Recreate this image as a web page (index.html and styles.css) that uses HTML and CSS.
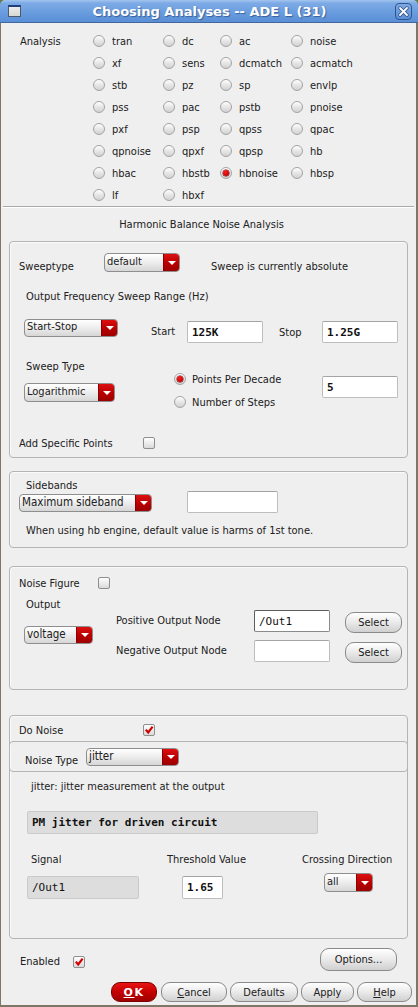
FILE: index.html
```html
<!DOCTYPE html>
<html>
<head>
<meta charset="utf-8">
<link rel="stylesheet" href="styles.css">
</head>
<body>
<div class="window">
  <div class="titlebar">
    <span class="ticon"></span>
    <span class="ttext">Choosing Analyses -- ADE L (31)</span>
    <span class="tclose"><svg width="15" height="15" viewBox="0 0 15 15"><path d="M4 4 L11 11 M11 4 L4 11" stroke="#2b4f86" stroke-width="3.4" stroke-linecap="round"/><path d="M4 4 L11 11 M11 4 L4 11" stroke="#fff" stroke-width="1.8" stroke-linecap="round"/></svg></span>
  </div>
  <div class="frame">
    <div class="analysis">
      <div class="alabel">Analysis</div>
      <div class="agrid">
        <label class="radio"><span class="rb"></span>tran</label>
        <label class="radio"><span class="rb"></span>dc</label>
        <label class="radio"><span class="rb"></span>ac</label>
        <label class="radio"><span class="rb"></span>noise</label>
        <label class="radio"><span class="rb"></span>xf</label>
        <label class="radio"><span class="rb"></span>sens</label>
        <label class="radio"><span class="rb"></span>dcmatch</label>
        <label class="radio"><span class="rb"></span>acmatch</label>
        <label class="radio"><span class="rb"></span>stb</label>
        <label class="radio"><span class="rb"></span>pz</label>
        <label class="radio"><span class="rb"></span>sp</label>
        <label class="radio"><span class="rb"></span>envlp</label>
        <label class="radio"><span class="rb"></span>pss</label>
        <label class="radio"><span class="rb"></span>pac</label>
        <label class="radio"><span class="rb"></span>pstb</label>
        <label class="radio"><span class="rb"></span>pnoise</label>
        <label class="radio"><span class="rb"></span>pxf</label>
        <label class="radio"><span class="rb"></span>psp</label>
        <label class="radio"><span class="rb"></span>qpss</label>
        <label class="radio"><span class="rb"></span>qpac</label>
        <label class="radio"><span class="rb"></span>qpnoise</label>
        <label class="radio"><span class="rb"></span>qpxf</label>
        <label class="radio"><span class="rb"></span>qpsp</label>
        <label class="radio"><span class="rb"></span>hb</label>
        <label class="radio"><span class="rb"></span>hbac</label>
        <label class="radio"><span class="rb"></span>hbstb</label>
        <label class="radio"><span class="rb on"></span>hbnoise</label>
        <label class="radio"><span class="rb"></span>hbsp</label>
        <label class="radio"><span class="rb"></span>lf</label>
        <label class="radio"><span class="rb"></span>hbxf</label>
      </div>
    </div>
    <div class="sep"></div>
    <div class="heading">Harmonic Balance Noise Analysis</div>

    <div class="grp g1">
      <div class="row r-swt">
        <span class="lbl l-swt">Sweeptype</span>
        <div class="dd w-default"><span class="ddt">default</span><span class="dda"></span></div>
        <span class="lbl l-abs">Sweep is currently absolute</span>
      </div>
      <div class="lbl l-range">Output Frequency Sweep Range (Hz)</div>
      <div class="row r-ss">
        <div class="dd w-ss"><span class="ddt">Start-Stop</span><span class="dda"></span></div>
        <span class="lbl l-start">Start</span>
        <div class="inp w76 mt3">125K</div>
        <span class="lbl l-stop">Stop</span>
        <div class="inp w76 mt3">1.25G</div>
      </div>
      <div class="row r-st">
        <div class="col c-st">
          <span class="lbl l-st">Sweep Type</span>
          <div class="dd w-log"><span class="ddt">Logarithmic</span><span class="dda"></span></div>
        </div>
        <div class="col c-rad">
          <label class="radio r1"><span class="rb on"></span>Points Per Decade</label>
          <label class="radio r2"><span class="rb"></span>Number of Steps</label>
        </div>
        <div class="inp w76 mt16">5</div>
      </div>
      <div class="row r-add">
        <span class="lbl l-add">Add Specific Points</span>
        <span class="cb"></span>
      </div>
    </div>

    <div class="grp g2">
      <div class="lbl l-sb">Sidebands</div>
      <div class="row r-sb">
        <div class="dd w-max"><span class="ddt">Maximum sideband</span><span class="dda"></span></div>
        <div class="inp w91"></div>
      </div>
      <div class="lbl l-hb">When using hb engine, default value is harms of 1st tone.</div>
    </div>

    <div class="grp g3">
      <div class="row r-nf">
        <span class="lbl l-nf">Noise Figure</span>
        <span class="cb"></span>
      </div>
      <div class="row r-out">
        <div class="col c-out">
          <span class="lbl l-out">Output</span>
          <div class="dd w-volt"><span class="ddt">voltage</span><span class="dda"></span></div>
        </div>
        <div class="col c-nodes">
          <span class="lbl l-pos">Positive Output Node</span>
          <span class="lbl l-neg">Negative Output Node</span>
        </div>
        <div class="col c-inps">
          <div class="inp w76 focus plain mt12">/Out1</div>
          <div class="inp w76 mt8"></div>
        </div>
        <div class="col c-sel">
          <div class="btn sel1">Select</div>
          <div class="btn sel2">Select</div>
        </div>
      </div>
    </div>

    <div class="grp g4">
      <div class="row r-dn">
        <span class="lbl l-dn">Do Noise</span>
        <span class="cb checked"><svg width="10" height="10" viewBox="0 0 10 10"><path d="M1.8 4.6 L4.2 7.4 L8.6 1.6" fill="none" stroke="#d40000" stroke-width="2.2"/></svg></span>
      </div>
      <div class="subbox">
        <span class="lbl l-nt">Noise Type</span>
        <div class="dd w-jit"><span class="ddt">jitter</span><span class="dda"></span></div>
      </div>
      <div class="lbl l-jit">jitter: jitter measurement at the output</div>
      <div class="gbox w-pm">PM jitter for driven circuit</div>
      <div class="row r-hdr">
        <span class="lbl l-sig">Signal</span>
        <span class="lbl l-thr">Threshold Value</span>
        <span class="lbl">Crossing Direction</span>
      </div>
      <div class="row r-fld">
        <div class="gbox plain w-sig">/Out1</div>
        <div class="inp w-thr">1.65</div>
        <div class="dd w-all"><span class="ddt">all</span><span class="dda"></span></div>
      </div>
    </div>

    <div class="row r-en">
      <span class="lbl l-en">Enabled</span>
      <span class="cb checked en-cb"><svg width="10" height="10" viewBox="0 0 10 10"><path d="M1.8 4.6 L4.2 7.4 L8.6 1.6" fill="none" stroke="#d40000" stroke-width="2.2"/></svg></span>
      <div class="btn b-opt">Options...</div>
    </div>
    <div class="row r-btns">
      <div class="btn ok"><u>O</u>K</div>
      <div class="btn b-cancel"><u>C</u>ancel</div>
      <div class="btn b-def">Defaults</div>
      <div class="btn b-apply">Apply</div>
      <div class="btn b-help"><u>H</u>elp</div>
    </div>
  </div>
</div>
</body>
</html>
```

FILE: styles.css
```css
* { box-sizing: border-box; }
html, body { margin: 0; padding: 0; }
body {
  width: 418px; height: 1007px; overflow: hidden;
  background: #5f7a3c;
  font-family: "DejaVu Sans Condensed", "DejaVu Sans", sans-serif;
  font-stretch: condensed;
  font-size: 11px;
  color: #202020;
}
.window { width: 418px; height: 1007px; display: flex; flex-direction: column; }

.titlebar {
  height: 23px; flex: none;
  display: flex; align-items: center;
  padding: 0 6px 0 8px;
  border-radius: 5px 5px 0 0;
  background: linear-gradient(#a3c4ee 0, #7eabe6 3px, #6a9ddf 12px, #5a8fd6 22px);
  border-bottom: 1px solid #41679e;
}
.ticon {
  width: 13px; height: 12px;
  border: 1px solid #4d5a6e; border-top: 2px solid #1e3f7a;
  background: linear-gradient(#ececea, #d8d8d4);
}
.ttext {
  flex: 1; text-align: center; padding-left: 3px;
  font-family: "DejaVu Sans", sans-serif; font-stretch: normal;
  font-weight: bold; font-size: 13px; color: #fff;
  text-shadow: 1px 1px 1px rgba(20, 50, 100, 0.55);
}
.tclose {
  width: 17px; height: 17px;
  border: 1px solid #2c5590; border-radius: 4px;
  background: linear-gradient(#7eaae4, #5a8ed6);
  display: flex; align-items: center; justify-content: center;
}

.frame {
  flex: 1;
  background: #efefef;
  border-left: 1px solid #7f7666;
  border-right: 2px solid #7f7666;
  border-bottom: 2px solid #7f7666;
  display: flex; flex-direction: column;
}

.lbl { line-height: 13px; white-space: nowrap; }
.row { display: flex; align-items: flex-start; flex: none; }
.col { display: flex; flex-direction: column; align-items: flex-start; }

/* analysis */
.analysis { display: flex; padding-top: 7px; height: 183px; flex: none; }
.alabel { margin-left: 19px; width: 73px; line-height: 22px; padding-top: 1px; }
.agrid { display: grid; grid-template-columns: 70px 57px 71px 80px; grid-auto-rows: 22px; }
.radio { display: flex; align-items: center; gap: 7px; white-space: nowrap; }
.rb {
  width: 12px; height: 12px; flex: none;
  border-radius: 50%;
  border: 1px solid #a3a3a3;
  background: linear-gradient(#ffffff, #e6e6e6 50%, #d2d2d2);
  display: flex; align-items: center; justify-content: center;
}
.rb.on::after {
  content: ""; width: 6px; height: 6px; border-radius: 50%;
  background: radial-gradient(circle at 40% 35%, #ff2020, #c00000 70%);
  box-shadow: 0 0 0 0.5px #7a0000;
}

.sep { height: 2px; margin: 0 2px; border-top: 1px solid #a9a9a9; border-bottom: 1px solid #ffffff; flex: none; }
.heading { margin-top: 10px; line-height: 13px; text-align: center; padding-right: 14px; flex: none; }

/* group boxes */
.grp {
  margin: 0 8px; flex: none;
  border: 1px solid #b4b4b4; border-radius: 4px;
  box-shadow: inset 1px 1px 0 #fafafa;
}

/* dropdown */
.dd {
  display: flex; height: 19px;
  border: 1px solid #8e8e8e; border-radius: 4px;
  background: linear-gradient(#ffffff, #efefef 45%, #d6d6d6);
  overflow: hidden; flex: none;
}
.ddt { flex: 1; padding-left: 2px; line-height: 15px; white-space: nowrap; }
.dda {
  width: 16px; flex: none;
  background: linear-gradient(#dc1010, #b80000 55%, #9c0000);
  border-left: 1px solid #8a0000;
  display: flex; align-items: center; justify-content: center;
}
.dda::after {
  content: ""; width: 0; height: 0;
  border-left: 4px solid transparent; border-right: 4px solid transparent;
  border-top: 4px solid #ffffff;
}

/* inputs */
.inp {
  height: 22px; flex: none;
  background: #ffffff;
  border: 1px solid #bdbdbd; border-top-color: #a4a4a4;
  border-radius: 2px;
  font-family: "DejaVu Sans Mono", monospace; font-stretch: normal;
  font-weight: bold; font-size: 11px; color: #111;
  padding-left: 4px;
  display: flex; align-items: center;
}
.inp.focus { border-color: #5d5d5d; border-bottom-color: #8a8a8a; border-right-color: #8a8a8a; }
.plain { font-weight: normal; }
.w76 { width: 76px; }
.w91 { width: 91px; }
.mt3 { margin-top: 3px; }
.mt8 { margin-top: 8px; }
.mt12 { margin-top: 12px; }
.mt16 { margin-top: 16px; }

.gbox {
  height: 23px; flex: none;
  background: #dddddd;
  border: 1px solid #cacaca; border-radius: 2px;
  font-family: "DejaVu Sans Mono", monospace; font-stretch: normal;
  font-weight: bold; font-size: 11px; color: #111;
  padding-left: 4px;
  display: flex; align-items: center;
}
.gbox.plain { font-weight: normal; }

/* checkbox */
.cb {
  width: 12px; height: 12px; flex: none;
  border: 1px solid #8e8e8e; border-radius: 2px;
  background: linear-gradient(#ffffff, #dadada);
  display: flex; align-items: center; justify-content: center;
}

/* buttons */
.btn {
  height: 21px; flex: none;
  border: 1px solid #8a8a8a; border-radius: 9px;
  background: linear-gradient(#ffffff, #ececec 45%, #d0d0d0);
  display: flex; align-items: center; justify-content: center;
  white-space: nowrap;
}
.btn u { text-decoration: underline; text-underline-offset: 1px; }

/* group 1 */
.g1 { margin-top: 10px; padding: 11px 0 7px; }
.r-swt { height: 20px; }
.l-swt { margin-left: 9px; width: 85px; margin-top: 7px; }
.w-default { width: 76px; }
.l-abs { margin-left: 31px; margin-top: 7px; }
.l-range { margin-top: 17px; margin-left: 16px; }
.r-ss { margin-top: 15px; height: 25px; }
.w-ss { width: 94px; height: 18px; margin-left: 14px; margin-top: 1px; }
.w-ss .ddt { line-height: 14px; }
.l-start { margin-left: 33px; width: 36px; margin-top: 7px; }
.l-stop { margin-left: 16px; width: 43px; margin-top: 8px; }
.r-st { margin-top: 17px; }
.c-st { margin-left: 14px; width: 91px; }
.l-st { margin-left: 2px; line-height: 14px; }
.w-log { width: 91px; margin-top: 9px; }
.c-rad { margin-left: 59px; width: 148px; }
.c-rad .radio { gap: 6px; height: 14px; }
.r1 { margin-top: 12px; }
.r2 { margin-top: 9px; }
.r-add { margin-top: 28px; height: 13px; }
.l-add { margin-left: 9px; width: 124px; }

/* group 2 */
.g2 { margin-top: 13px; padding: 8px 0 10px; }
.l-sb { margin-left: 16px; line-height: 11px; }
.r-sb { height: 22px; }
.w-max { width: 133px; height: 18px; margin-left: 9px; margin-top: 3px; }
.w-max .ddt { line-height: 14px; font-size: 11.5px; }
.r-sb .inp { margin-left: 35px; }
.l-hb { margin-top: 11px; margin-left: 16px; }

/* group 3 */
.g3 { margin-top: 18px; padding: 10px 0 26px; }
.r-nf { height: 13px; }
.l-nf { margin-left: 9px; width: 79px; }
.r-out { margin-top: 8px; }
.c-out { margin-left: 14px; width: 69px; }
.l-out { margin-left: 2px; line-height: 14px; }
.w-volt { width: 69px; height: 18px; margin-top: 14px; }
.w-volt .ddt { line-height: 14px; font-size: 11.5px; }
.c-nodes { margin-left: 23px; width: 138px; }
.l-pos { margin-top: 16px; }
.l-neg { margin-top: 17px; }
.c-inps { width: 76px; }
.c-sel { margin-left: 15px; width: 57px; }
.sel1 { width: 57px; margin-top: 14px; }
.sel2 { width: 57px; margin-top: 9px; }

/* group 4 */
.g4 { margin-top: 25px; padding: 8px 0 39px; }
.r-dn { height: 13px; }
.l-dn { margin-left: 9px; width: 124px; }
.subbox {
  margin: 4px -1px 0; height: 31px;
  border: 1px solid #b4b4b4; border-radius: 4px;
  display: flex; align-items: flex-start;
}
.l-nt { margin-left: 15px; width: 61px; margin-top: 12px; }
.w-jit { width: 93px; height: 18px; margin-top: 6px; }
.w-jit .ddt { line-height: 14px; font-size: 11.5px; }
.l-jit { margin-top: 8px; margin-left: 21px; }
.w-pm { width: 291px; margin-top: 18px; margin-left: 17px; }
.r-hdr { margin-top: 19px; margin-left: 21px; }
.l-sig { width: 136px; }
.l-thr { width: 135px; }
.r-fld { margin-top: 7px; }
.w-sig { width: 112px; margin-left: 17px; margin-top: 3px; }
.w-thr { width: 41px; height: 23px; margin-left: 43px; margin-top: 3px; }
.w-all { width: 49px; margin-left: 101px; }

/* bottom */
.r-en { margin-top: 9px; height: 23px; }
.l-en { margin-left: 19px; width: 53px; margin-top: 7px; }
.en-cb { margin-top: 8px; }
.b-opt { margin-left: auto; margin-right: 19px; width: 77px; height: 23px; }
.r-btns { margin-top: 11px; justify-content: flex-end; padding-right: 4px; }
.r-btns .btn { height: 20px; }
.ok {
  width: 46px; margin-right: 4px;
  background: linear-gradient(#e81414, #c40000 50%, #a00000);
  border-color: #7a0000;
  color: #fff; font-weight: bold; letter-spacing: 1.5px;
  font-family: "DejaVu Sans", sans-serif; font-stretch: normal;
}
.b-cancel { width: 66px; margin-right: 3px; }
.b-def { width: 68px; margin-right: 3px; }
.b-apply { width: 53px; margin-right: 3px; }
.b-help { width: 55px; }
```
